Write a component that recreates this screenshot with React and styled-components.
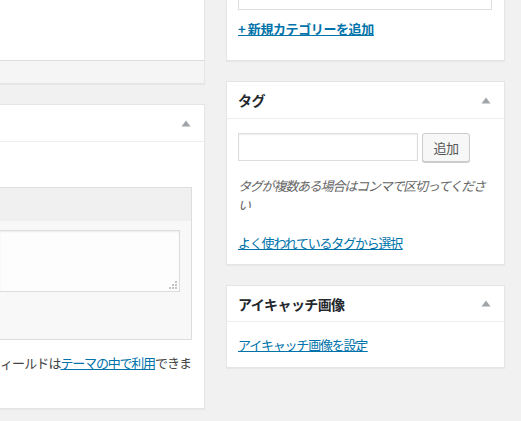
import React from "react";
import styled, { createGlobalStyle } from "styled-components";

const Global = createGlobalStyle`
  html, body { margin: 0; padding: 0; background: #f1f1f1; }
  body {
    font-family: "Noto Sans CJK JP", "Noto Sans", sans-serif;
    font-size: 13px;
    color: #444;
    overflow: hidden;
  }
`;

const Page = styled.div`
  display: flex;
  align-items: flex-start;
  gap: 21px;
  width: 521px;
  height: 421px;
  overflow: hidden;
`;

const Column = styled.div`
  display: flex;
  flex-direction: column;
  gap: 20px;
  width: ${(p) => p.$w}px;
  flex: none;
`;

const Panel = styled.div`
  background: #fff;
  border: 1px solid #e5e5e5;
  border-left: ${(p) => (p.$cutLeft ? "none" : "1px solid #e5e5e5")};
  border-top: ${(p) => (p.$cutTop ? "none" : "1px solid #e5e5e5")};
  box-shadow: 0 1px 1px rgba(0, 0, 0, 0.04);
`;

const Header = styled.div`
  height: ${(p) => p.$h || 36}px;
  display: flex;
  align-items: center;
  justify-content: space-between;
  padding: 0 13px 0 11px;
  border-bottom: 1px solid #eee;
`;

const Title = styled.h2`
  margin: 0;
  font-size: 14px;
  font-weight: 700;
  color: #23282d;
  letter-spacing: -0.6px;
  line-height: 20px;
`;

const Body = styled.div`
  padding: ${(p) => p.$pad || "0 12px 12px 11px"};
  min-height: ${(p) => p.$minH || 0}px;
`;

const Footer = styled.div`
  height: 22px;
  background: #f5f5f5;
  border-top: 1px solid #ddd;
`;

const EditorBox = styled.div`
  border: 1px solid #ddd;
  border-left: none;
  background: #f8f8f8;
`;

const EditorToolbar = styled.div`
  height: 33px;
  background: #f0f0f0;
`;

const EditorArea = styled.div`
  padding: 9px 11px 47px 0;
`;

const TextArea = styled.div`
  position: relative;
  height: 60px;
  background: #fdfdfd;
  border: 1px solid #ddd;
  border-left: none;
  box-shadow: inset 0 1px 2px rgba(0, 0, 0, 0.07);
`;

const Grip = styled.svg`
  position: absolute;
  right: 1px;
  bottom: 1px;
`;

const Note = styled.p`
  margin: 13px 0 0;
  line-height: 20px;
  white-space: nowrap;
  overflow: hidden;
  letter-spacing: -0.9px;
  color: #444;
`;

const Link = styled.a`
  color: #0073aa;
  text-decoration: underline;
  font-weight: ${(p) => (p.$bold ? 700 : 400)};
  letter-spacing: ${(p) => (p.$bold ? "-0.4px" : "-1.2px")};
  cursor: pointer;
`;

const LinkLine = styled.p`
  margin: ${(p) => p.$m || "0"};
  line-height: 20px;
`;

const CatList = styled.div`
  height: 9px;
  border: 1px solid #ddd;
  border-top: none;
`;

const TagRow = styled.div`
  display: flex;
  gap: 4px;
  padding-top: 14px;
`;

const TagInput = styled.input`
  box-sizing: border-box;
  width: 180px;
  height: 28px;
  margin: 0;
  border: 1px solid #ddd;
  box-shadow: inset 0 1px 2px rgba(0, 0, 0, 0.07);
  background: #fff;
  font: inherit;
`;

const Button = styled.button`
  box-sizing: border-box;
  width: 48px;
  height: 29px;
  margin: 0;
  padding: 0;
  border: 1px solid #ccc;
  border-radius: 3px;
  background: #f7f7f7;
  box-shadow: 0 1px 0 #ccc;
  color: #555;
  font-family: inherit;
  font-size: 13px;
  letter-spacing: -0.5px;
`;

const Hint = styled.p`
  margin: 14px 0 19px;
  font-style: italic;
  color: #666;
  line-height: 19px;
  letter-spacing: -1.2px;
`;

const Arrow = () => (
  <svg width="10" height="7" viewBox="0 0 10 7">
    <polygon points="5,0.5 9.5,6.5 0.5,6.5" fill="#a0a5aa" />
  </svg>
);

export default function App() {
  return (
    <>
      <Global />
      <Page>
        <Column $w={205}>
          <Panel $cutLeft $cutTop>
            <Body $pad="0" $minH={60} />
            <Footer />
          </Panel>
          <Panel $cutLeft>
            <Header>
              <span />
              <Arrow />
            </Header>
            <Body $pad="45px 12px 35px 0">
              <EditorBox>
                <EditorToolbar />
                <EditorArea>
                  <TextArea>
                    <Grip width="9" height="9" viewBox="0 0 9 9">
                      <rect x="6" y="0" width="2" height="2" fill="#c4c4c4" />
                      <rect x="3" y="3" width="2" height="2" fill="#c4c4c4" />
                      <rect x="6" y="3" width="2" height="2" fill="#c4c4c4" />
                      <rect x="0" y="6" width="2" height="2" fill="#c4c4c4" />
                      <rect x="3" y="6" width="2" height="2" fill="#c4c4c4" />
                      <rect x="6" y="6" width="2" height="2" fill="#c4c4c4" />
                    </Grip>
                  </TextArea>
                </EditorArea>
              </EditorBox>
              <Note>
                ィールドは<Link>テーマの中で利用</Link>できま
              </Note>
            </Body>
          </Panel>
        </Column>

        <Column $w={279}>
          <Panel $cutTop>
            <Body $pad="0 12px 21px 11px">
              <CatList />
              <LinkLine $m="9px 0 0">
                <Link $bold>+ 新規カテゴリーを追加</Link>
              </LinkLine>
            </Body>
          </Panel>

          <Panel>
            <Header>
              <Title>タグ</Title>
              <Arrow />
            </Header>
            <Body $pad="0 12px 11px 11px">
              <TagRow>
                <TagInput type="text" />
                <Button>追加</Button>
              </TagRow>
              <Hint>タグが複数ある場合はコンマで区切ってください</Hint>
              <LinkLine>
                <Link>よく使われているタグから選択</Link>
              </LinkLine>
            </Body>
          </Panel>

          <Panel>
            <Header $h={35}>
              <Title>アイキャッチ画像</Title>
              <Arrow />
            </Header>
            <Body $pad="13px 12px 12px 11px">
              <LinkLine>
                <Link>アイキャッチ画像を設定</Link>
              </LinkLine>
            </Body>
          </Panel>
        </Column>
      </Page>
    </>
  );
}
